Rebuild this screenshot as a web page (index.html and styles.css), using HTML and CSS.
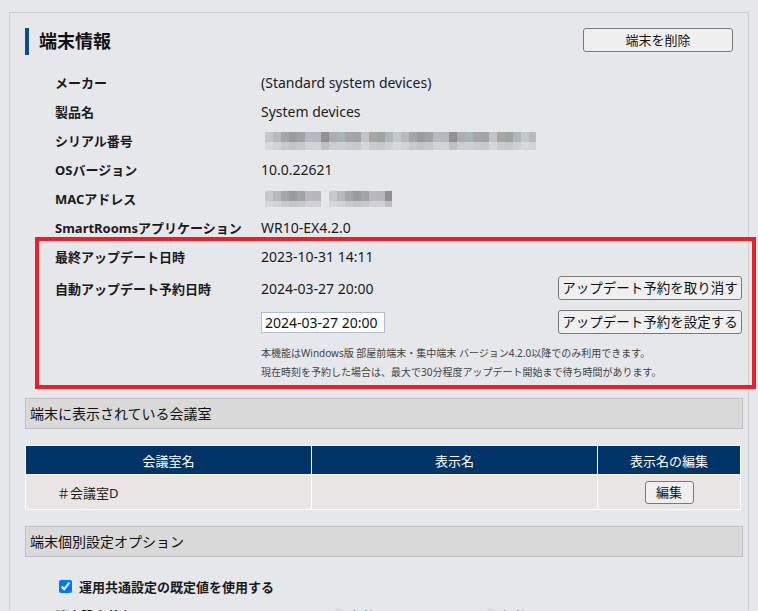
FILE: index.html
```html
<!DOCTYPE html>
<html lang="ja">
<head>
<meta charset="utf-8">
<title>端末情報</title>
<link rel="stylesheet" href="styles.css">
</head>
<body>
<div class="panel">
  <div class="head">
    <h2 class="title">端末情報</h2>
    <button class="btn btn-delete">端末を削除</button>
  </div>

  <div class="info">
    <div class="row"><div class="label">メーカー</div><div class="value">(Standard system devices)</div></div>
    <div class="row"><div class="label">製品名</div><div class="value">System devices</div></div>
    <div class="row"><div class="label">シリアル番号</div><div class="value"><span class="mosaic mosaic-serial"></span></div></div>
    <div class="row"><div class="label">OSバージョン</div><div class="value">10.0.22621</div></div>
    <div class="row"><div class="label">MACアドレス</div><div class="value"><span class="mosaic mosaic-mac1"></span><span class="mosaic mosaic-mac2"></span></div></div>
    <div class="row"><div class="label">SmartRoomsアプリケーション</div><div class="value">WR10-EX4.2.0</div></div>
    <div class="row"><div class="label">最終アップデート日時</div><div class="value">2023-10-31 14:11</div></div>
    <div class="row tall"><div class="label">自動アップデート予約日時</div><div class="value">2024-03-27 20:00</div><button class="btn btn-update">アップデート予約を取り消す</button></div>
    <div class="row tall"><div class="label"></div><div class="value"><input class="date-input" type="text" value="2024-03-27 20:00"></div><button class="btn btn-update">アップデート予約を設定する</button></div>
    <div class="notes">
      <p>本機能はWindows版 部屋前端末・集中端末 バージョン4.2.0以降でのみ利用できます。</p>
      <p>現在時刻を予約した場合は、最大で30分程度アップデート開始まで待ち時間があります。</p>
    </div>
  </div>

  <div class="section">端末に表示されている会議室</div>

  <table class="rooms">
    <thead>
      <tr><th class="c1">会議室名</th><th class="c2">表示名</th><th class="c3">表示名の編集</th></tr>
    </thead>
    <tbody>
      <tr><td class="room">＃会議室D</td><td></td><td class="center"><button class="btn btn-edit">編集</button></td></tr>
    </tbody>
  </table>

  <div class="section section-2">端末個別設定オプション</div>

  <label class="check-row"><input type="checkbox" checked><span>運用共通設定の既定値を使用する</span></label>

  <div class="info">
    <div class="row"><div class="label">端末設定共有</div><div class="value radios"><label class="radio"><input type="radio" name="m" disabled>有効モード</label><label class="radio"><input type="radio" name="m" disabled>無効モード</label></div></div>
  </div>
</div>

<div class="highlight"></div>
</body>
</html>
```
FILE: styles.css
```css
html, body {
  margin: 0;
  padding: 0;
}
body {
  background: #e6e7eb;
  font-family: "Noto Sans", "Noto Sans CJK JP", sans-serif;
  font-size: 13px;
  color: #1b1b1b;
  padding-top: 12px;
  height: 599px;
  overflow: hidden;
  position: relative;
}
.panel {
  margin-left: 9px;
  width: 718px;
  border: 1px solid #cfcfd1;
  border-bottom: none;
  padding: 15px 5px 0 15px;
  min-height: 600px;
}
.head {
  display: flex;
  justify-content: space-between;
  align-items: flex-start;
}
.title {
  margin: 0;
  height: 27px;
  line-height: 27px;
  border-left: 4px solid #0e4a91;
  padding-left: 10px;
  font-size: 18px;
  font-weight: bold;
  color: #111;
}
.btn {
  font-family: "Noto Sans", "Noto Sans CJK JP", sans-serif;
  font-size: 13px;
  color: #111;
  background: #efefef;
  border: 1px solid #7a7a7a;
  border-radius: 3px;
  padding: 0;
  line-height: 20px;
}
.btn-delete {
  width: 150px;
  height: 24px;
  margin-right: 10px;
}
.info {
  margin-left: 30px;
  margin-right: 1px;
}
.head + .info {
  margin-top: 13px;
}
.row {
  display: flex;
  align-items: center;
  height: 29px;
}
.row.tall {
  height: 34px;
}
.label {
  width: 206px;
  flex: none;
  font-weight: bold;
}
.value {
  flex: 1;
  display: flex;
  align-items: center;
  font-size: 14px;
}
.mosaic {
  display: inline-block;
  height: 18px;
  margin-left: 4px;
  background:
    linear-gradient(180deg, rgba(230,231,235,0) 0, rgba(230,231,235,0) 10px, rgba(230,231,235,0.55) 10px),
    repeating-linear-gradient(90deg,
      #c6c7c9 0 8px, #b7babc 8px 16px, #a3a5a8 16px 24px, #9a9c9a 24px 32px,
      #a1a2a5 32px 40px, #b6b9bd 40px 48px, #b9b6bb 48px 56px, #919191 56px 64px,
      #aaacae 64px 72px, #aab4bb 72px 80px, #a6a7aa 80px 88px, #a3a4a7 88px 96px,
      #c2c3c6 96px 104px, #a9a6a6 104px 112px, #9ea4a0 112px 120px, #afb6b6 120px 128px);
}
.mosaic-serial {
  width: 271px;
}
.mosaic-mac1 {
  width: 56px;
  height: 16px;
}
.mosaic-mac2 {
  width: 63px;
  height: 16px;
  margin-left: 8px;
}
.btn-update {
  width: 184px;
  height: 24px;
  flex: none;
  font-size: 13.5px;
}
.date-input {
  width: 124px;
  height: 21px;
  box-sizing: border-box;
  border: 1px solid #b4bccb;
  background: #fff;
  padding: 0 3px;
  font-family: "Noto Sans", "Noto Sans CJK JP", sans-serif;
  font-size: 14px;
  color: #111;
  margin: 0;
}
.notes {
  margin: 5px 0 0 206px;
  font-size: 10px;
  color: #444;
}
.notes p {
  margin: 0;
  line-height: 19px;
}
.section {
  margin-top: 16px;
  height: 29px;
  line-height: 29px;
  border: 1px solid #c0c0c0;
  background: #d9d9d9;
  padding-left: 4px;
  font-size: 14px;
  color: #111;
}
.rooms {
  margin-top: 16px;
  width: 715px;
  border-collapse: collapse;
  border: 1px solid #fff;
  table-layout: fixed;
}
.rooms th, .rooms td {
  border: 1px solid #fff;
  padding: 0;
}
.rooms th {
  background: #003466;
  color: #fff;
  font-weight: normal;
  height: 28px;
  font-size: 13px;
}
.c1 { width: 285px; }
.c2 { width: 285px; }
.c3 { width: 142px; }
.rooms td {
  background: #e9e5e4;
  height: 34px;
}
.rooms td.room {
  padding-left: 31px;
}
.rooms td.center {
  text-align: center;
}
.btn-edit {
  width: 49px;
  height: 23px;
}
.check-row {
  display: flex;
  align-items: center;
  height: 30px;
  margin-top: 14px;
  padding-left: 34px;
  font-weight: bold;
}
.check-row input {
  margin: 0 7px 0 0;
  width: 13px;
  height: 13px;
  accent-color: #0075ff;
}
.radio {
  display: flex;
  align-items: center;
  width: 152px;
  margin-left: 71px;
  font-size: 13px;
}
.radio + .radio {
  margin-left: 0;
}
.radio input {
  margin: 0 4px 0 0;
  width: 13px;
  height: 13px;
}
.highlight {
  position: absolute;
  left: 35px;
  top: 237px;
  width: 721px;
  height: 152px;
  box-sizing: border-box;
  border: 4px solid #e8202a;
  pointer-events: none;
}
```
